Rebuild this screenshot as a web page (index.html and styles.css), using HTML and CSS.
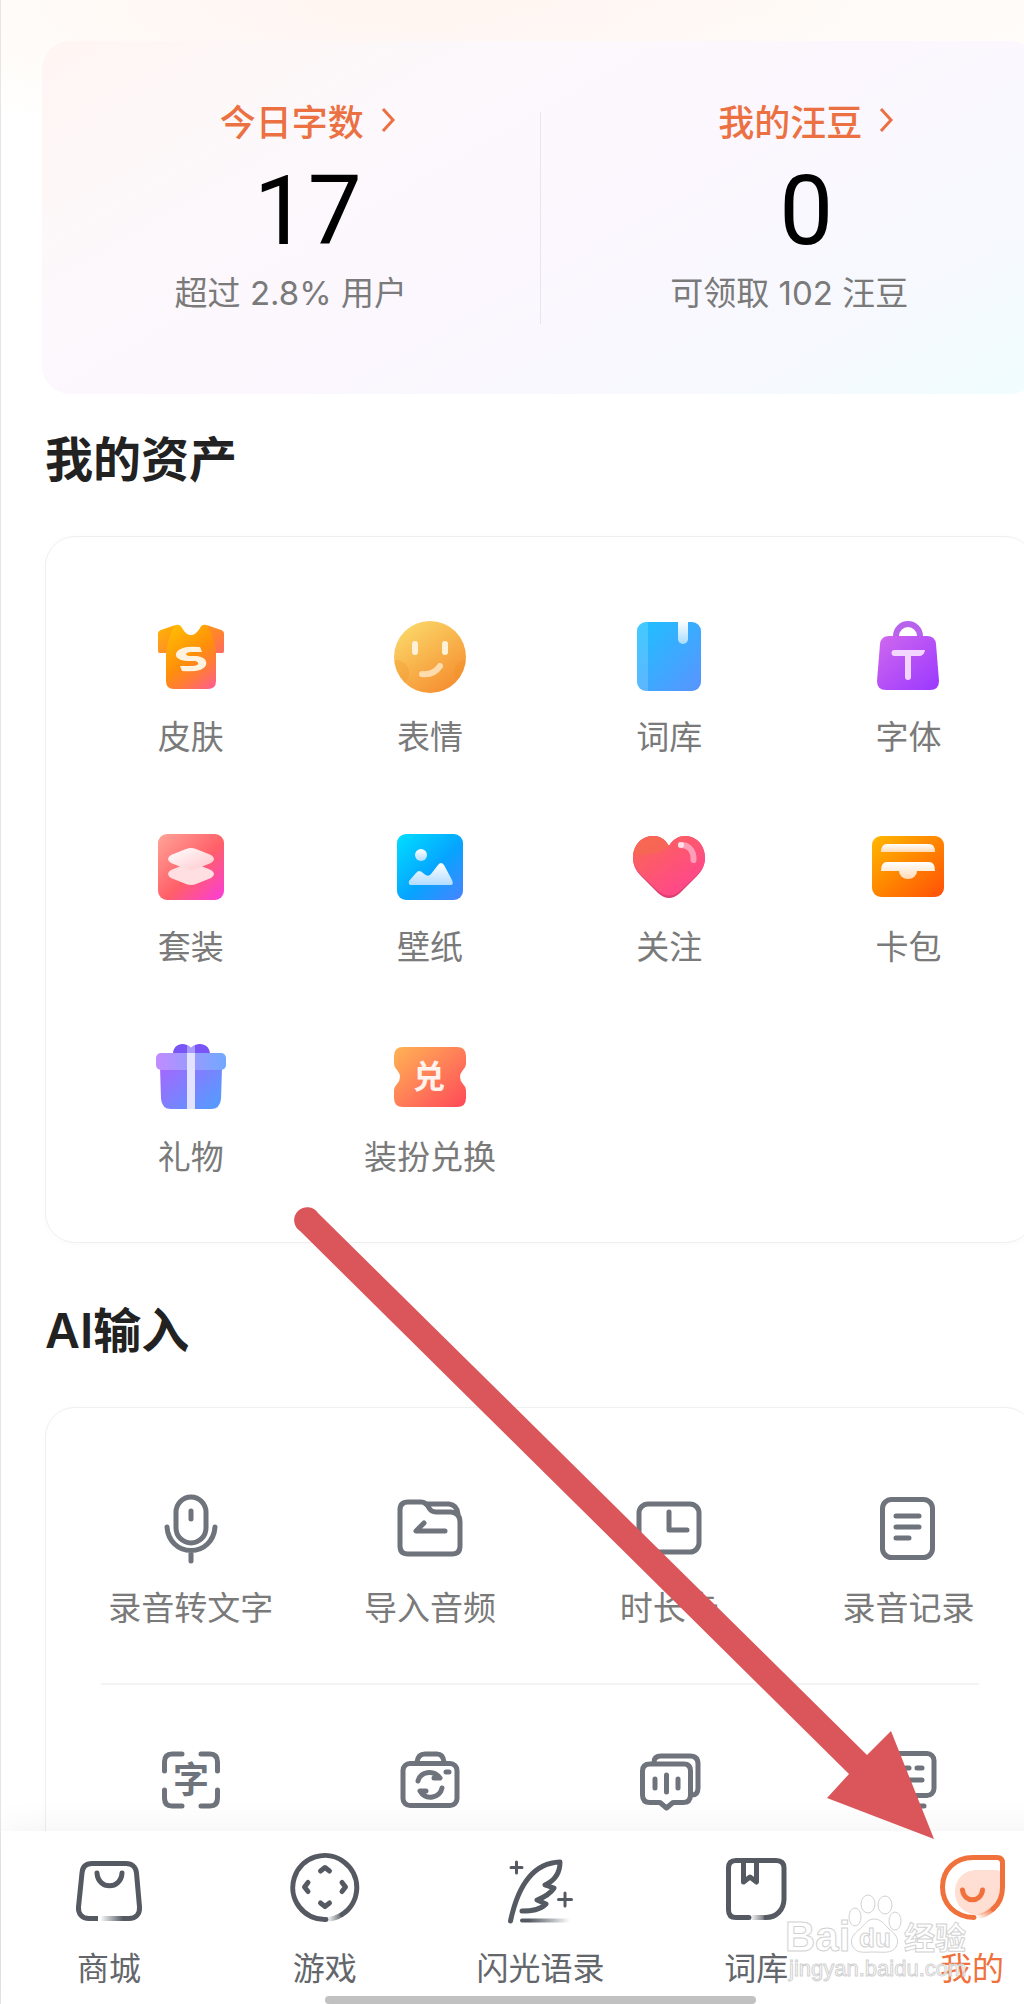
FILE: index.html
```html
<!DOCTYPE html>
<html lang="zh-CN">
<head>
<meta charset="utf-8">
<meta name="viewport" content="width=device-width, initial-scale=1">
<title>我的</title>
<link rel="stylesheet" href="styles.css">
</head>
<body>
<div class="app">
  <main class="content">
    <section class="stats">
      <div class="stat">
        <a class="stat-title" href="#words">今日字数<svg class="chevron" viewBox="0 0 16 28"><path d="M3 3l10 11L3 25"/></svg></a>
        <strong class="stat-value">17</strong>
        <span class="stat-note">超过 2.8% 用户</span>
      </div>
      <div class="stat-divider"></div>
      <div class="stat">
        <a class="stat-title" href="#beans">我的汪豆<svg class="chevron" viewBox="0 0 16 28"><path d="M3 3l10 11L3 25"/></svg></a>
        <strong class="stat-value">0</strong>
        <span class="stat-note">可领取 102 汪豆</span>
      </div>
    </section>

    <section class="group">
      <h2 class="group-title">我的资产</h2>
      <div class="panel">
        <div class="grid">
          <a class="item" href="#skin">
            <svg class="icon" viewBox="0 0 72 72">
              <defs>
                <linearGradient id="skin" x1="0.1" y1="0" x2="0.9" y2="1"><stop offset="0" stop-color="#ffc400"/><stop offset="0.5" stop-color="#ff8f0a"/><stop offset="0.72" stop-color="#ff7a3c"/><stop offset="1" stop-color="#ff5a9a"/></linearGradient>
                <linearGradient id="sleeve" x1="0" y1="0" x2="1" y2="1"><stop offset="0" stop-color="#ff9d00"/><stop offset="1" stop-color="#ff5596"/></linearGradient>
              </defs>
              <path fill="url(#skin)" d="M21 4Q25 3 27 7C31 13 33 14 36 14S41 13 45 7Q47 3 51 4L66 9Q69 10 69 13V30Q69 32 67 32H61V60Q61 68 53 68H19Q11 68 11 60V32H5Q3 32 3 30V13Q3 10 6 9Z"/>
              <path fill="url(#sleeve)" opacity=".45" d="M20 4L6 9Q3 10 3 13V30Q3 32 5 32H11C12 22 15 13 20 4ZM52 4L66 9Q69 10 69 13V30Q69 32 67 32H61C60 22 57 13 52 4Z"/>
              <path fill="#fff2df" d="M45 26L47 31H36C31 31 29 34 34 35H41C54 36 54 46 45 49Q39 51 27 50L25 45H38C44 45 45 41 40 40H32C18 39 18 30 28 27Q33 25 45 26Z"/>
            </svg>
            <span>皮肤</span>
          </a>
          <a class="item" href="#emoji">
            <svg class="icon" viewBox="0 0 72 72">
              <defs><linearGradient id="face" x1="0.1" y1="0" x2="0.8" y2="1"><stop offset="0" stop-color="#fbdc6c"/><stop offset="1" stop-color="#f58c2e"/></linearGradient><clipPath id="faceClip"><circle cx="36" cy="36" r="36"/></clipPath></defs>
              <circle cx="36" cy="36" r="36" fill="url(#face)"/>
              <g clip-path="url(#faceClip)" fill="#f08a20" opacity=".25"><circle cx="2" cy="52" r="13"/><circle cx="72" cy="51" r="12"/></g>
              <g fill="none" stroke="#fff1d8" stroke-width="6" stroke-linecap="round"><path d="M21 23v8M51 23v8"/><path stroke="#ffdcae" d="M28 53C36 54 42 51 46 45"/></g>
            </svg>
            <span>表情</span>
          </a>
          <a class="item" href="#dict">
            <svg class="icon" viewBox="0 0 72 72">
              <defs><linearGradient id="book" x1="0" y1="0" x2="1" y2="1"><stop offset="0" stop-color="#1cc2ff"/><stop offset="1" stop-color="#5a93ff"/></linearGradient><linearGradient id="mark" x2="0" y2="1"><stop offset="0" stop-color="#fff"/><stop offset="1" stop-color="#a6dcff"/></linearGradient></defs>
              <rect x="4" y="1" width="64" height="69" rx="9" fill="url(#book)"/>
              <path fill="#fff" opacity=".16" d="M15 1H13Q4 1 4 10V61Q4 70 13 70H15Z"/>
              <path fill="url(#mark)" d="M45 0H55V18A5 5 0 0 1 45 18Z"/>
            </svg>
            <span>词库</span>
          </a>
          <a class="item" href="#font">
            <svg class="icon" viewBox="0 0 72 72">
              <defs><linearGradient id="bag" x1="0" y1="0" x2="1" y2="1"><stop offset="0" stop-color="#d068ee"/><stop offset="1" stop-color="#9a38ff"/></linearGradient></defs>
              <path fill="none" stroke="#b863ec" stroke-width="6" d="M24 17V15A12 12 0 0 1 48 15V17"/>
              <path fill="url(#bag)" d="M17 15H55Q63 15 64 23L67 60Q67 69 58 69H14Q5 69 5 60L8 23Q9 15 17 15Z"/>
              <path fill="#f3d6ff" d="M22.500 29H53Q52 35 47 35H39V56A3 3 0 0 1 33 56V35H22.500A3 3 0 0 1 22.500 29Z"/>
            </svg>
            <span>字体</span>
          </a>
          <a class="item" href="#suit">
            <svg class="icon" viewBox="0 0 72 72">
              <defs><linearGradient id="suit" x1="0" y1="0" x2="1" y2="1"><stop offset="0" stop-color="#ffa498"/><stop offset="0.55" stop-color="#ff5f68"/><stop offset="0.95" stop-color="#fb40d0"/></linearGradient><linearGradient id="layer" x1="0" y1="0" x2="1" y2="1"><stop offset="0" stop-color="#fff"/><stop offset="1" stop-color="#ffc6cb"/></linearGradient></defs>
              <rect x="3" y="3" width="66" height="66" rx="9" fill="url(#suit)"/>
              <path fill="#ffdfe1" d="M31 33Q36 31 41 33L56 39Q62 43 56 47L41 53Q36 55 31 53L16 47Q10 43 16 39Z"/>
              <path fill="url(#layer)" d="M31 18Q36 16 41 18L56 24Q62 28 56 32L41 38Q36 40 31 38L16 32Q10 28 16 24Z"/>
            </svg>
            <span>套装</span>
          </a>
          <a class="item" href="#wallpaper">
            <svg class="icon" viewBox="0 0 72 72">
              <defs><linearGradient id="wall" x1="0" y1="0" x2="1" y2="1"><stop offset="0" stop-color="#00dfff"/><stop offset="0.55" stop-color="#06a4ff"/><stop offset="1" stop-color="#4a83ff"/></linearGradient><linearGradient id="hill" x2="0" y2="1"><stop offset="0" stop-color="#fff"/><stop offset="1" stop-color="#b2dcff"/></linearGradient></defs>
              <rect x="3" y="3" width="66" height="66" rx="9" fill="url(#wall)"/>
              <circle cx="27" cy="24" r="6" fill="url(#hill)"/>
              <path fill="url(#hill)" d="M17 54Q14 54 15 50L22 42Q25 38 29 42Q34 47 37 43L44 34Q47 30 50 34L58 49Q60 54 57 54Z"/>
            </svg>
            <span>壁纸</span>
          </a>
          <a class="item" href="#follow">
            <svg class="icon" viewBox="0 0 72 72">
              <defs><linearGradient id="heart" x1="0.1" y1="0.1" x2="0.7" y2="0.8"><stop offset="0" stop-color="#fb6458"/><stop offset="1" stop-color="#ff4a87"/></linearGradient></defs>
              <path fill="#dd3e70" d="M36 15C31 7 26 5 20 5C8 5 0 15 0 27C0 34 3 40 8 45L25 62Q36 72 47 62L64 45C69 40 72 34 72 27C72 15 64 5 52 5C46 5 40 8 36 15Z"/>
              <path fill="url(#heart)" d="M36 15C31 7 26 5 20 5C8 5 0 15 0 27C0 33 3 39 8 44L25 60Q36 69 47 60L64 44C69 39 72 33 72 27C72 15 64 5 52 5C46 5 40 8 36 15Z"/>
              <path fill="#f56a50" opacity=".7" d="M36 15C31 7 26 5 20 5C10 5 3 13 1 23C14 25 29 22 36 15Z"/>
              <path fill="none" stroke="#ff9fb7" stroke-width="6" stroke-linecap="round" d="M48 14C56 14 61 20 60.500 29"/>
              <circle cx="48" cy="14" r="3" fill="#ffe1e6"/>
            </svg>
            <span>关注</span>
          </a>
          <a class="item" href="#cards">
            <svg class="icon" viewBox="0 0 72 72">
              <defs><linearGradient id="wallet" x1="0" y1="0" x2="1" y2="1"><stop offset="0" stop-color="#ffb800"/><stop offset="0.5" stop-color="#ff8500"/><stop offset="1" stop-color="#ff4f08"/></linearGradient><linearGradient id="slot" x2="0" y2="1"><stop offset="0" stop-color="#fff"/><stop offset="1" stop-color="#ffdab4"/></linearGradient></defs>
              <rect y="5" width="72" height="61" rx="9" fill="url(#wallet)"/>
              <path fill="url(#slot)" d="M15 13H57Q63 13 63 21H9Q9 13 15 13Z"/>
              <path fill="url(#slot)" d="M15 31H57Q63 31 63 40H45A9 8 0 0 1 27 40H9Q9 31 15 31Z"/>
            </svg>
            <span>卡包</span>
          </a>
          <a class="item" href="#gifts">
            <svg class="icon" viewBox="0 0 72 72">
              <defs><linearGradient id="gift" x1="0" y1="0" x2="1" y2="0.7"><stop offset="0" stop-color="#a566ff"/><stop offset="1" stop-color="#5999ff"/></linearGradient><linearGradient id="lid" x2="1"><stop offset="0" stop-color="#c08cff"/><stop offset="1" stop-color="#72a8ff"/></linearGradient></defs>
              <path fill="#7a55f5" d="M18 13C18 2 30 0 36 7C42 0 55 2 55 13Z"/>
              <path fill="url(#gift)" d="M5 26H67L66 58Q65 68 56 68H16Q7 68 6 58Z"/>
              <rect x="1" y="12" width="70" height="17" rx="5" fill="url(#lid)"/>
              <path fill="#e3e2ff" d="M32 12H40V68H32Z"/><path fill="#a79bff" d="M32 4L36 7L40 4V12H32Z"/>
            </svg>
            <span>礼物</span>
          </a>
          <a class="item" href="#redeem">
            <svg class="icon" viewBox="0 0 72 72">
              <defs><linearGradient id="ticket" x1="0" y1="0" x2="1" y2="1"><stop offset="0" stop-color="#ffb354"/><stop offset="0.5" stop-color="#ff7f58"/><stop offset="1" stop-color="#ff4858"/></linearGradient></defs>
              <path fill="url(#ticket)" d="M9 6H63Q72 6 72 15V23Q72 26 69 29Q63 36 69 43Q72 46 72 49V57Q72 66 63 66H9Q0 66 0 57V49Q0 46 3 43Q9 36 3 29Q0 26 0 23V15Q0 6 9 6Z"/>
              <text class="icon-char icon-char-light" x="35" y="47">兑</text>
            </svg>
            <span>装扮兑换</span>
          </a>
        </div>
      </div>
    </section>

    <section class="group group-ai">
      <h2 class="group-title">AI输入</h2>
      <div class="panel">
        <div class="grid">
          <a class="item" href="#transcribe">
            <svg class="icon line" viewBox="0 0 72 72"><rect x="21" y="5" width="30" height="46" rx="15"/><path d="M36 19v8M12 35C13 49 23 58.500 36 58.500S59 49 60 35M36 59v10"/></svg>
            <span>录音转文字</span>
          </a>
          <a class="item" href="#import">
            <svg class="icon line" viewBox="0 0 72 72"><path d="M14 10H27C31 10 33 12 35 16Q37 20 42 20H57Q66 21 66 30V54Q66 62 58 62H14Q6 62 6 54V18Q6 10 14 10ZM32 12H55Q63 13 64 22M30 31L22 39H51"/></svg>
            <span>导入音频</span>
          </a>
          <a class="item" href="#duration">
            <svg class="icon line" viewBox="0 0 72 72"><rect x="6" y="12" width="60" height="48" rx="9"/><path d="M36 20V38H54"/></svg>
            <span>时长卡</span>
          </a>
          <a class="item" href="#records">
            <svg class="icon line" viewBox="0 0 72 72"><rect x="10.500" y="7.500" width="50" height="58" rx="9"/><path d="M24 24H47M24 35H47M24 46H37"/></svg>
            <span>录音记录</span>
          </a>
        </div>
        <hr class="rule">
        <div class="grid">
          <a class="item" href="#ocr" aria-label="扫描">
            <svg class="icon line" viewBox="0 0 72 72"><path d="M27 10H17Q9.500 10 9.500 18V27M46 10H55Q62.500 10 62.500 18V27M27 62H17Q9.500 62 9.500 54V46M46 62H55Q62.500 62 62.500 54V46"/><text class="icon-char" x="36" y="49">字</text></svg>
          </a>
          <a class="item" href="#photo" aria-label="拍照">
            <svg class="icon line" viewBox="0 0 72 72"><rect x="9" y="19.500" width="54" height="42" rx="7"/><path d="M23 18Q24 10 31 10H43Q49 10 50 18M52 28H55M24 37C26 28 39 25 46 34H40M48 44C46 54 32 57 26 47H32"/></svg>
          </a>
          <a class="item" href="#dialogue" aria-label="语音">
            <svg class="icon line" viewBox="0 0 72 72"><path d="M17 20H51Q57.500 20 57.500 27V51Q57.500 58.500 50 58.500H40L33.500 64L27 58.500H17Q9.500 58.500 9.500 51V27Q9.500 20 17 20ZM21 18Q21 12 28 12H57Q65 12 65 20V44Q65 51 59 51M22 35V44M33.500 31V48M45 35V44"/></svg>
          </a>
          <a class="item" href="#board" aria-label="字幕">
            <svg class="icon line" viewBox="0 0 72 72"><rect x="10" y="9.500" width="52" height="42" rx="7"/><path d="M22 24H25M34 24H37M45 24H50M22 36H50M24 62H52"/></svg>
          </a>
        </div>
      </div>
    </section>
  </main>

  <nav class="tabbar">
    <div class="tabs">
      <a class="tab" href="#mall">
        <svg class="icon line" viewBox="0 0 72 72">
          <defs><linearGradient id="fadeMall" gradientUnits="userSpaceOnUse" x1="27" y1="0" x2="50" y2="0"><stop offset="0" stop-color="#555a62" stop-opacity="0"/><stop offset="1" stop-color="#555a62"/></linearGradient></defs>
          <path stroke-linecap="butt" d="M25 65.500H16C9 65.500 5 61 5.500 54L9 20C9.500 14 13 10.500 19 10.500H53C59 10.500 63 14 63.500 20L66.500 54C67 61 63 65.500 56 65.500H50"/>
          <path stroke-linecap="butt" stroke="url(#fadeMall)" d="M28 65.500L51 65.400"/>
          <path d="M24 20C25 37 48 37 49 20"/>
        </svg>
        <span>商城</span>
      </a>
      <a class="tab" href="#games">
        <svg class="icon line" viewBox="0 0 72 72">
          <defs><linearGradient id="fadeGame" gradientUnits="userSpaceOnUse" x1="38" y1="0" x2="54" y2="0"><stop offset="0" stop-color="#555a62" stop-opacity="0"/><stop offset="1" stop-color="#555a62"/></linearGradient></defs>
          <path d="M37 66.500A32 32 0 1 1 53 61.500"/><path stroke="url(#fadeGame)" stroke-linecap="butt" d="M37 66.500Q46 66 53 61.500"/>
          <path d="M31.500 18L36 14.500L40.500 18M31.500 50L36 53.500L40.500 50M19 29.500L15.500 34L19 38.500M53 29.500L56.500 34L53 38.500"/>
        </svg>
        <span>游戏</span>
      </a>
      <a class="tab" href="#quotes">
        <svg class="icon line" viewBox="0 0 72 72">
          <defs><linearGradient id="fadeQuill" gradientUnits="userSpaceOnUse" x1="25" y1="0" x2="66" y2="0"><stop offset="0" stop-color="#555a62"/><stop offset="1" stop-color="#555a62" stop-opacity="0"/></linearGradient></defs>
          <path d="M6.500 68C12 42 24 10 56 9C56 18 52 27 41 32L50 35C46 41 41 44 33 47L42 51C36 57 28 58 18 58"/>
          <path stroke="url(#fadeQuill)" stroke-width="4" d="M18 67.500L66 67.400"/>
          <path class="spark" d="M12.500 9V20M7 14.500H18M61 40V53M54.500 46.500H67.500"/>
        </svg>
        <span>闪光语录</span>
      </a>
      <a class="tab" href="#dictionary">
        <svg class="icon line" viewBox="0 0 72 72">
          <defs><linearGradient id="fadeBook" gradientUnits="userSpaceOnUse" x1="30" y1="0" x2="48" y2="0"><stop offset="0" stop-color="#555a62" stop-opacity="0"/><stop offset="1" stop-color="#555a62"/></linearGradient></defs>
          <path d="M29 64.500H16Q8.500 64.500 8.500 57V15Q8.500 7.500 16 7.500H56Q64 7.500 64 15V46C64 57 56 64.500 46 64.500"/><path stroke="url(#fadeBook)" stroke-linecap="butt" d="M32 64.500L47 64.400"/>
          <path d="M23.500 8V29L30 24L36.500 29V8"/>
        </svg>
        <span>词库</span>
      </a>
      <a class="tab tab-active" href="#me" aria-current="page">
        <svg class="icon line" viewBox="0 0 72 72">
          <defs><linearGradient id="fadeMe" gradientUnits="userSpaceOnUse" x1="42" y1="66" x2="58" y2="54"><stop offset="0" stop-color="#f1713c" stop-opacity="0"/><stop offset="1" stop-color="#f1713c"/></linearGradient></defs>
          <path fill="#ffdfd3" stroke="none" d="M41 17H60Q65 17 65 22V40C62 54 54 62 41 62C28 61 19 52 19 39C19 26 28 17 41 17Z"/>
          <path d="M38 64.500C19 64 6.500 51 6.500 34C6.500 17 19 4.500 37 4.500H61Q66.500 4.500 66.500 10V34C66.500 43 63 51 57 56"/><path stroke="url(#fadeMe)" stroke-linecap="butt" d="M41 64Q51 62 58 55"/>
          <path d="M26.500 37C28 50 45 50 46.500 37"/>
        </svg>
        <span>我的</span>
      </a>
    </div>
    <div class="home-bar"></div>
  </nav>
</div>

<svg class="overlay" viewBox="0 0 1024 2004" aria-hidden="true">
  <path fill="#da565a" d="M318 1213L867 1755L891 1731L934 1839L827 1798L849 1774L300 1231A13 13 0 1 1 318 1213Z"/>
  <g class="mark">
    <text class="mark-brand" x="785" y="1951">Bai</text>
    <ellipse cx="855" cy="1917" rx="6" ry="9"/><ellipse cx="868" cy="1904" rx="7" ry="9"/><ellipse cx="885" cy="1905" rx="7" ry="9"/><ellipse cx="895" cy="1921" rx="6" ry="9"/>
    <path d="M874 1919C881 1919 884 1924 889 1929C896 1934 900 1940 896 1947C892 1954 882 1952 874 1952C866 1952 857 1954 853 1947C849 1940 853 1934 860 1929C865 1924 868 1919 874 1919Z"/>
    <text class="mark-small" x="859" y="1947">du</text>
    <text class="mark-cjk" x="904" y="1949">经验</text>
    <text class="mark-url" x="789" y="1976">jingyan.baidu.com</text>
  </g>
</svg>
</body>
</html>
```
FILE: styles.css
```css
* {
  box-sizing: border-box;
}

body {
  margin: 0;
  position: relative;
  overflow: hidden;
  background: #fff;
  color: #7a7a7a;
  font-family: "Noto Sans CJK SC", "Noto Sans", sans-serif;
}

a {
  color: inherit;
  text-decoration: none;
}

/* The layout runs a little past the right edge of the window. */
.app {
  display: flex;
  flex-direction: column;
  width: calc(100% + 56px);
  height: 100vh;
  border-left: 1px solid #e6e6e6;
  background: radial-gradient(ellipse 460px 120px at 400px 0, #fff5f1, rgba(255, 252, 248, 0)),
    radial-gradient(ellipse 900px 144px at 560px 0, #fff9f6, #fffdfa 80%, #fff);
}

.content {
  flex: 1;
  min-height: 0;
  overflow: hidden;
  padding: 41px 42px 0 41px;
}

.stats {
  display: grid;
  grid-template-columns: 1fr 1px 1fr;
  border-radius: 28px;
  background: linear-gradient(150deg, #fff6f3 0, #fcf8fb 28%, #fcf7fe 52%, #f6f9fe 82%, #f0fdff 100%);
}

.stat {
  display: flex;
  flex-direction: column;
  align-items: center;
  padding: 52px 0 77px;
}

.stat-title,
.stat-value {
  padding-left: 34px;
}

.stat-title {
  display: flex;
  align-items: center;
  gap: 16px;
  font-size: 36px;
  line-height: 54px;
  font-weight: 500;
  color: #eb7042;
}

.chevron {
  width: 16px;
  height: 28px;
  fill: none;
  stroke: currentColor;
  stroke-width: 3;
}

.stat-value {
  margin: 14px 0 8px;
  font-family: Roboto, sans-serif;
  font-size: 96px;
  line-height: 100px;
  font-weight: 400;
  color: #000;
}

.stat-note {
  font-family: Inter, "Noto Sans CJK SC", sans-serif;
  font-size: 33px;
  line-height: 48px;
}

.stat-divider {
  margin: 71px 0 70px;
  background: #e9e5ec;
}

.group {
  padding: 31px 3px 0;
}

.group-ai {
  padding-top: 53px;
}

.group-title {
  margin: 0 0 41px;
  font-family: Inter, "Noto Sans CJK SC", sans-serif;
  font-size: 48px;
  line-height: 70px;
  font-weight: 600;
  color: #222;
}

.panel {
  padding: 84px 6px 63px 25px;
  border: 1px solid #efefef;
  border-radius: 30px;
  box-shadow: 0 2px 10px rgba(0, 0, 0, 0.02);
  background: #fff;
}

.grid {
  display: grid;
  grid-template-columns: repeat(4, 1fr);
  row-gap: 72px;
}

.item,
.tab {
  display: flex;
  flex-direction: column;
  align-items: center;
  line-height: 48px;
}

.item {
  gap: 18px;
  font-size: 33px;
}

.icon {
  display: block;
  width: 72px;
  height: 72px;
}

.line {
  fill: none;
  stroke: #6e737c;
  stroke-width: 5;
  stroke-linecap: round;
  stroke-linejoin: round;
}

.icon-char {
  font-size: 36px;
  font-weight: 700;
  text-anchor: middle;
  stroke: none;
  fill: #6e737c;
}

.icon-char-light {
  font-size: 32px;
  fill: #fff3ee;
}

.rule {
  height: 2px;
  margin: 53px 49px 59px 30px;
  border: 0;
  background: #f3f3f3;
}

.tabbar {
  position: relative;
  padding-top: 22px;
  background: #fff;
  box-shadow: 0 0 36px rgba(0, 0, 0, 0.06);
}

.tabs {
  display: grid;
  grid-template-columns: repeat(5, 1fr);
}

.tab {
  gap: 17px;
  font-size: 32px;
  color: #63666a;
}

.tab .line {
  stroke: #555a62;
}

.tab .spark {
  stroke-width: 3;
}

.tab-active {
  color: #f1713c;
}

.tab-active .line {
  stroke: #f1713c;
}

.home-bar {
  width: 40%;
  height: 8px;
  margin: 6px auto 0;
  border-radius: 4px;
  background: #c1c1c1;
}

/* Annotation layer drawn above the page. */
.overlay {
  position: absolute;
  top: 0;
  left: 0;
  width: 100%;
  pointer-events: none;
}

.mark {
  fill: #fff;
  fill-opacity: 0.75;
  stroke: #d2d2d2;
  stroke-width: 1;
  font-family: "Liberation Sans", "Noto Sans CJK SC", sans-serif;
  font-weight: 700;
}

.mark-brand {
  font-size: 42px;
}

.mark-small {
  font-size: 26px;
}

.mark-cjk {
  font-size: 31px;
}

.mark-url {
  font-size: 22px;
  font-weight: 400;
}
```
